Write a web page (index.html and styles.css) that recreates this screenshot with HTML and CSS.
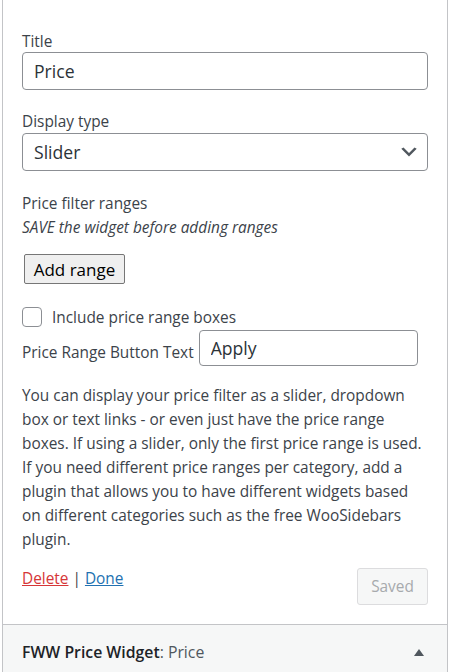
FILE: index.html
```html
<!DOCTYPE html>
<html>
<head>
<meta charset="utf-8">
<link rel="stylesheet" href="styles.css">
</head>
<body>
<div class="widget">
  <div class="inside">
    <div class="field field-title">
      <label class="lbl">Title</label>
      <input class="text" type="text" value="Price">
    </div>
    <div class="field field-select">
      <label class="lbl">Display type</label>
      <div class="select">
        <span>Slider</span>
        <svg class="chev" width="22" height="22" viewBox="0 0 20 20"><path d="M5 6l5 5 5-5 2 1-7 7-7-7z" fill="#50575e"/></svg>
      </div>
    </div>
    <div class="ranges">
      <div class="line">Price filter ranges</div>
      <div class="line note">SAVE the widget before adding ranges</div>
    </div>
    <div class="addrow"><button class="add">Add range</button></div>
    <div class="check-row">
      <span class="checkbox"></span>
      <span class="lbl">Include price range boxes</span>
    </div>
    <div class="btntext-row">
      <span class="lbl">Price Range Button Text</span>
      <input class="text apply" type="text" value="Apply">
    </div>
    <p class="desc">You can display your price filter as a slider, dropdown<br>box or text links - or even just have the price range<br>boxes. If using a slider, only the first price range is used.<br>If you need different price ranges per category, add a<br>plugin that allows you to have different widgets based<br>on different categories such as the free WooSidebars<br>plugin.</p>
    <div class="controls">
      <div class="links"><a class="del">Delete</a><span class="sep"> | </span><a class="done">Done</a></div>
      <button class="saved">Saved</button>
    </div>
  </div>
  <div class="bar">
    <div class="bar-title"><strong>FWW Price Widget</strong>: Price</div>
    <span class="tri"></span>
  </div>
</div>
</body>
</html>
```
FILE: styles.css
```css
* { box-sizing: border-box; }
html, body { margin: 0; padding: 0; background: #fff; }
body {
  font-family: "Open Sans", "Noto Sans", sans-serif;
  font-size: 15.4px;
  color: #3c434a;
  width: 451px;
  height: 672px;
  overflow: hidden;
}
.widget {
  margin-left: 2px;
  width: 446px;
  border-left: 1px solid #c3c4c7;
  border-right: 1px solid #c3c4c7;
  height: 672px;
  display: flex;
  flex-direction: column;
}
.inside {
  padding: 31px 19px 0;
  flex: none;
}
.lbl { display: block; line-height: 22px; color: #3c434a; white-space: nowrap; }
.field-title .lbl { margin-bottom: -1px; }
.text {
  display: block;
  width: 100%;
  height: 38px;
  border: 1px solid #8c8f94;
  border-radius: 4px;
  padding: 0 11px;
  font-family: inherit;
  font-size: 17.6px;
  color: #2c3338;
  background: #fff;
  outline: none;
}
.field-select { margin-top: 21px; }
.select {
  height: 38px;
  border: 1px solid #8c8f94;
  border-radius: 4px;
  padding: 0 7px 0 11px;
  display: flex;
  align-items: center;
  justify-content: space-between;
  font-size: 17.6px;
  color: #2c3338;
}
.chev { display: block; }
.ranges { margin-top: 21px; }
.line { line-height: 24px; }
.note { font-style: italic; }
.addrow { margin-top: 14px; padding-left: 2px; }
.add {
  display: block;
  font-family: inherit;
  font-size: 17px;
  color: #000;
  background: #efefef;
  border: 1px solid #767676;
  border-radius: 2px;
  height: 30px;
  width: 101px;
  padding: 0;
}
.check-row {
  display: flex;
  align-items: center;
  margin-top: 22px;
  gap: 10px;
}
.check-row .lbl { position: relative; top: 1px; }
.checkbox {
  width: 20px;
  height: 20px;
  border: 1px solid #8c8f94;
  border-radius: 4px;
  display: block;
  flex: none;
}
.btntext-row {
  display: flex;
  align-items: flex-end;
  gap: 5px;
  margin-top: 2px;
}
.btntext-row .lbl { padding-bottom: 2px; }
.apply { width: 219px; height: 36px; flex: none; }
.desc {
  margin: 18px 0 0;
  line-height: 24px;
  color: #3c434a;
  white-space: nowrap;
}
.controls {
  display: flex;
  justify-content: space-between;
  align-items: flex-start;
  margin-top: 15px;
  padding-bottom: 19px;
}
.links { line-height: 24px; }
.del { color: #d63638; text-decoration: underline; }
.done { color: #2271b1; text-decoration: underline; }
.sep { color: #3c434a; }
.saved {
  display: block;
  font-family: inherit;
  font-size: 15.4px;
  color: #a7aaad;
  background: #f6f7f7;
  border: 1px solid #dcdcde;
  border-radius: 3px;
  height: 37px;
  width: 71px;
  padding: 0;
  margin-top: 1px;
}
.bar {
  flex: 1;
  border-top: 1px solid #c3c4c7;
  background: #f6f7f7;
  display: flex;
  justify-content: space-between;
  align-items: flex-start;
  padding: 16px 23px 0 19px;
}
.bar-title { font-size: 15.8px; color: #50575e; line-height: 22px; }
.bar-title strong { font-weight: 600; color: #1d2327; }
.tri {
  width: 0; height: 0;
  border-left: 5px solid transparent;
  border-right: 5px solid transparent;
  border-bottom: 7px solid #50575e;
  margin-top: 8px;
}
```
